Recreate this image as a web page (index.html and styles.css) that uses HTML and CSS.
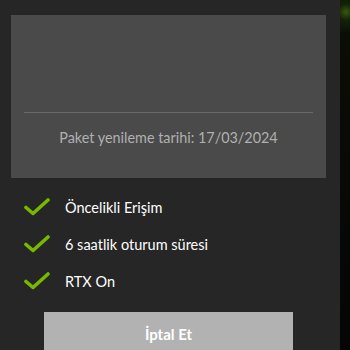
FILE: index.html
```html
<!DOCTYPE html>
<html lang="tr">
<head>
<meta charset="utf-8">
<link rel="stylesheet" href="styles.css">
</head>
<body>
<div class="page">
  <div class="panel">
    <div class="card">
      <div class="card-top"></div>
      <div class="divider"></div>
      <div class="renew">Paket yenileme tarihi: 17/03/2024</div>
    </div>
    <ul class="features">
      <li class="feature">
        <svg class="check" width="26" height="18" viewBox="0 0 26 18"><path d="M2 9.5 L9 15.5 L24 2" fill="none" stroke="#76b900" stroke-width="3.6" stroke-linecap="round" stroke-linejoin="round"/></svg>
        <span>Öncelikli Erişim</span>
      </li>
      <li class="feature">
        <svg class="check" width="26" height="18" viewBox="0 0 26 18"><path d="M2 9.5 L9 15.5 L24 2" fill="none" stroke="#76b900" stroke-width="3.6" stroke-linecap="round" stroke-linejoin="round"/></svg>
        <span>6 saatlik oturum süresi</span>
      </li>
      <li class="feature">
        <svg class="check" width="26" height="18" viewBox="0 0 26 18"><path d="M2 9.5 L9 15.5 L24 2" fill="none" stroke="#76b900" stroke-width="3.6" stroke-linecap="round" stroke-linejoin="round"/></svg>
        <span>RTX On</span>
      </li>
    </ul>
    <div class="actions">
      <button class="cancel">İptal Et</button>
    </div>
  </div>
  <div class="edge"></div>
</div>
</body>
</html>
```
FILE: styles.css
```css
html, body {
  margin: 0;
  padding: 0;
  background: #000;
  font-family: Lato, "Noto Sans", sans-serif;
}
.page {
  display: flex;
  width: 350px;
  height: 350px;
  overflow: hidden;
}
.panel {
  width: 340px;
  background: #262626;
  padding: 15px 14px 0 11px;
  box-sizing: border-box;
  display: flex;
  flex-direction: column;
}
.panel > * {
  flex: none;
}
.edge {
  width: 10px;
  background: radial-gradient(circle at 6px 12px, rgba(90,150,20,0.55) 0, rgba(40,70,10,0.35) 8px, rgba(0,0,0,0) 22px), linear-gradient(#0a0f06, #050505);
}
.card {
  background: #4a4a4a;
  height: 163px;
  display: flex;
  flex-direction: column;
  padding: 0 13px;
}
.card-top {
  height: 97px;
}
.divider {
  height: 1px;
  background: #6a6a6a;
}
.renew {
  margin-top: 16px;
  text-align: center;
  color: #b0b0b0;
  font-size: 14.4px;
  line-height: 18px;
}
.features {
  list-style: none;
  margin: 20px 0 0 0;
  padding: 0 0 0 13px;
  display: flex;
  flex-direction: column;
  gap: 19px;
}
.feature {
  display: flex;
  align-items: center;
  height: 18px;
  color: #fff;
  font-size: 14.5px;
}
.check {
  margin-right: 15px;
  flex: none;
}
.actions {
  margin-top: 22px;
  padding-left: 33px;
}
.cancel {
  width: 249px;
  height: 44px;
  border: none;
  background: #b2b2b2;
  color: #fff;
  font-family: Lato, "Noto Sans", sans-serif;
  font-weight: 700;
  font-size: 15px;
  padding: 0;
}
```
